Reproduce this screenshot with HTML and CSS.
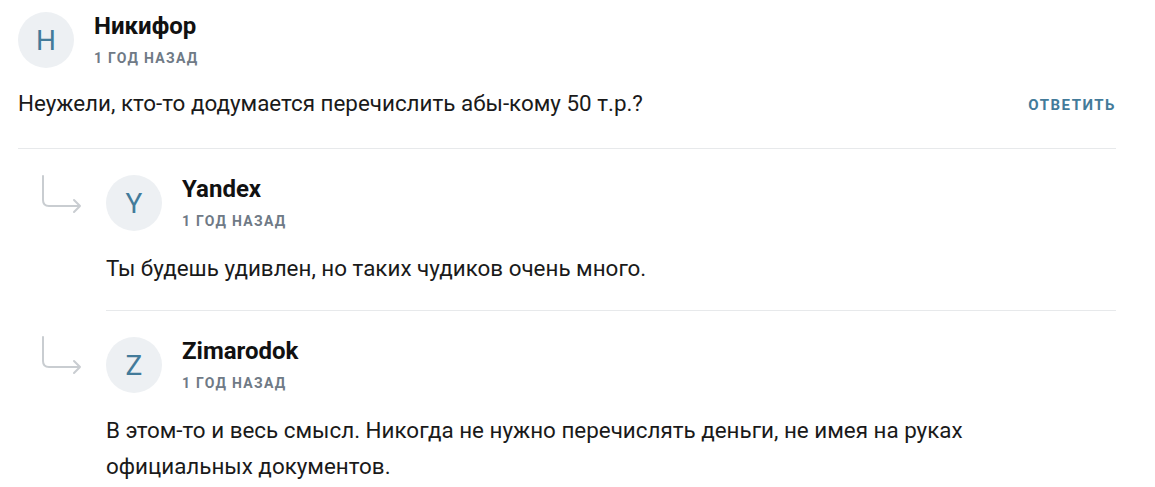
FILE: index.html
```html
<!DOCTYPE html>
<html lang="ru">

<head>
  <meta charset="UTF-8">
  <meta name="viewport" content="width=device-width, initial-scale=1.0">
  <title>Комментарии</title>
  <link rel="stylesheet" href="styles.css">
</head>

<body>
  <div class="comments">
    <div class="comment">
      <div class="comment-head">
        <div class="avatar">Н</div>
        <div class="meta">
          <div class="author">Никифор</div>
          <div class="time">1 год назад</div>
        </div>
      </div>
      <div class="comment-row">
        <p class="comment-text">Неужели, кто-то додумается перечислить абы-кому 50 т.р.?</p>
        <a class="reply-link" href="#">Ответить</a>
      </div>
    </div>

    <div class="replies">
      <div class="reply">
        <div class="reply-arrow">
          <svg width="44" height="44" viewBox="0 0 44 44">
            <path d="M3 1 V25 Q3 31 9 31 H40 M34 25 L40 31 L34 37" fill="none" stroke="#c9cdd1" stroke-width="2" stroke-linecap="round" stroke-linejoin="round" />
          </svg>
        </div>
        <div class="reply-body">
          <div class="comment-head">
            <div class="avatar">Y</div>
            <div class="meta">
              <div class="author">Yandex</div>
              <div class="time">1 год назад</div>
            </div>
          </div>
          <p class="comment-text">Ты будешь удивлен, но таких чудиков очень много.</p>
        </div>
      </div>

      <div class="reply">
        <div class="reply-arrow">
          <svg width="44" height="44" viewBox="0 0 44 44">
            <path d="M3 1 V25 Q3 31 9 31 H40 M34 25 L40 31 L34 37" fill="none" stroke="#c9cdd1" stroke-width="2" stroke-linecap="round" stroke-linejoin="round" />
          </svg>
        </div>
        <div class="reply-body bordered">
          <div class="comment-head">
            <div class="avatar">Z</div>
            <div class="meta">
              <div class="author">Zimarodok</div>
              <div class="time">1 год назад</div>
            </div>
          </div>
          <p class="comment-text">В этом-то и весь смысл. Никогда не нужно перечислять деньги, не имея на руках официальных документов.</p>
        </div>
      </div>
    </div>
  </div>
</body>

</html>
```

FILE: styles.css
```css
body {
  font-family: Roboto, "Liberation Sans", Arial, sans-serif;
  margin: 0;
  padding: 12px 39px 0 18px;
  background-color: #fff;
  color: #1a1a1a;
}

.comment {
  padding-bottom: 27px;
  border-bottom: 1px solid #e7e9eb;
}

.comment-head {
  display: flex;
  align-items: flex-start;
  gap: 20px;
}

.avatar {
  width: 56px;
  height: 56px;
  border-radius: 50%;
  background-color: #edf0f3;
  color: #437b9a;
  font-size: 28px;
  display: flex;
  align-items: center;
  justify-content: center;
  flex-shrink: 0;
}

.author {
  font-size: 24px;
  font-weight: bold;
  line-height: 28px;
  color: #111;
}

.time {
  margin-top: 8px;
  font-size: 14px;
  font-weight: bold;
  line-height: 20px;
  letter-spacing: 1.3px;
  text-transform: uppercase;
  color: #6f7a86;
}

.comment-row {
  display: flex;
  align-items: flex-start;
  justify-content: space-between;
  margin-top: 17px;
}

.comment-text {
  margin: 0;
  font-size: 22.4px;
  line-height: 36px;
  max-width: 960px;
}

.comment-head + .comment-text {
  margin-top: 19px;
}

.reply-link {
  padding-top: 6px;
  font-size: 15px;
  font-weight: bold;
  line-height: 28px;
  letter-spacing: 1.5px;
  text-transform: uppercase;
  text-decoration: none;
  color: #437b9a;
}

.reply {
  display: flex;
}

.reply-arrow {
  width: 88px;
  padding-left: 22px;
  padding-top: 26px;
  box-sizing: border-box;
  flex-shrink: 0;
}

.reply-body {
  flex: 1;
  padding: 26px 0 24px;
}

.reply-body.bordered {
  border-top: 1px solid #e7e9eb;
}

.reply-arrow svg {
  display: block;
}
```
